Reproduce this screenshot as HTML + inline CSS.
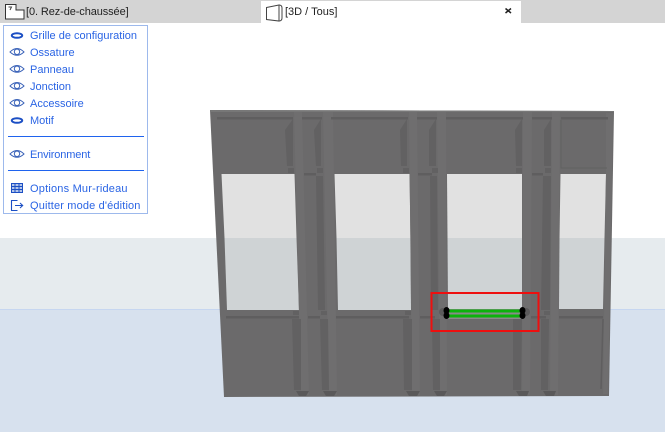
<!DOCTYPE html>
<html><head><meta charset="utf-8">
<style>
html,body{margin:0;padding:0;width:665px;height:432px;overflow:hidden;background:#fff}
#s{position:absolute;left:0;top:0}
.t{position:absolute;font:11px "Liberation Sans",sans-serif;white-space:nowrap;line-height:14px}
.m{color:#2a64e4;left:30px}
</style></head><body>
<svg id="s" width="665" height="432" viewBox="0 0 665 432" xmlns="http://www.w3.org/2000/svg">
<rect width="665" height="432" fill="#fff"/>
<rect y="238" width="665" height="72" fill="#e6ebee"/>
<rect y="310" width="665" height="122" fill="#d7e1ee"/>
<rect y="309" width="665" height="1" fill="#c6d6f0"/>
<rect width="665" height="23" fill="#d4d4d4"/>
<rect x="261" y="1" width="260" height="22" fill="#fff"/>
<path d="M5.500 4.500H16V10H24V19H5.500Z" fill="#fff" stroke="#333" stroke-width="1"/>
<path d="M8.500 7H11.500L10 10" fill="none" stroke="#444" stroke-width="1"/>
<path d="M266.500 7.500L279 5V21L266.500 19.500ZM279 5Q282 5 282 8V18Q282 21 279 21" fill="#fff" stroke="#444" stroke-width="1"/>
<path d="M505.500 8.500L511 13M511 8.500L505.500 13" stroke="#222" stroke-width="1.500"/>

<!-- wall -->
<path d="M210 110L614 111L609 396L224 397Z" fill="#6b6a6b"/>
<path d="M210 110L614 111L614 112L210 112Z" fill="#777"/>
<!-- glass -->
<g fill="#e1e1e1">
<path d="M221.500 174H294.500L296.500 238H224.500Z"/>
<path d="M334.500 174H409.500L410.500 238H336.500Z"/>
<path d="M447 174H522L522 238H447.500Z"/>
<path d="M560.500 174H606L604.500 238H559.500Z"/>
</g>
<g fill="#cfd3d5">
<path d="M224.500 238H296.500L299 310H227Z"/>
<path d="M336.500 238H410.500L411 310H338Z"/>
<path d="M447.500 238H522V310H448Z"/>
<path d="M559.500 238H604.500L603 309H559Z"/>
</g>
<!-- lighter mullions -->
<g fill="#6f6e6f">
<path d="M294 112H302L309 395H301Z"/>
<path d="M323 112H333L337 395H329Z"/>
<path d="M409 112H417L420 395H412Z"/>
<path d="M437 112H446L447 395H440Z"/>
<path d="M523 112H532L530 395H522Z"/>
<path d="M552 112H560L558 395H550Z"/>
<path d="M606 113H613L608 394H603L606 174Z"/>
</g>
<!-- horizontal dark rails top -->
<g fill="#5f5e5f">
<rect x="217" y="117" width="76" height="2.500"/>
<rect x="302" y="117" width="20" height="2.500"/>
<rect x="331" y="117" width="77" height="2.500"/>
<rect x="417" y="117" width="20" height="2.500"/>
<rect x="446" y="117" width="77" height="2.500"/>
<rect x="532" y="117" width="20" height="2.500"/>
<rect x="561" y="117" width="47" height="2.500"/>
<rect x="304" y="173" width="12" height="2.500"/>
<rect x="418" y="173" width="14" height="2.500"/>
<rect x="532" y="173" width="11" height="2.500"/>
<!-- bottom rails -->
<rect x="226" y="316" width="73" height="2.500"/>
<rect x="308" y="316" width="12" height="2.500"/>
<rect x="336" y="316" width="73" height="2.500"/>
<rect x="420" y="316" width="15" height="2.500"/>
<rect x="531" y="316" width="15" height="2.500"/>
<rect x="559" y="316" width="44" height="2.500"/>
</g>
<g fill="#626162">
<!-- shaded mullion faces upper -->
<path d="M293 119V166H287L285 130Z"/>
<path d="M321 119V166H316L314 130Z"/>
<path d="M407 119V166H401L400 130Z"/>
<path d="M436 119V166H429L429 130Z"/>
<path d="M522 119V166H516L515 130Z"/>
<path d="M551 119V166H544L544 130Z"/>
<!-- shaded mullion shafts -->
<path d="M316 176H323L325 310H318Z"/>
<path d="M430 176H437L438 310H431Z"/>
<path d="M543 176H551L550 310H541Z"/>
<!-- lower -->
<path d="M292 319H301L301 390H294Z"/>
<path d="M320 319H328L329 390H322Z"/>
<path d="M403 319H412V390H404Z"/>
<path d="M432 319H440L440 390H433Z"/>
<path d="M513 319H522L521 390H513Z"/>
<path d="M541 319H549L548 390H541Z"/>
<!-- small blocks -->
<rect x="288" y="168" width="6" height="5"/>
<rect x="317" y="168" width="6" height="5"/>
<rect x="403" y="168" width="6" height="5"/>
<rect x="432" y="168" width="6" height="5"/>
<rect x="516" y="168" width="6" height="5"/>
<rect x="545" y="168" width="6" height="5"/>
<rect x="293" y="311" width="6" height="4"/>
<rect x="321" y="311" width="6" height="4"/>
<rect x="405" y="311" width="6" height="4"/>
<rect x="544" y="311" width="6" height="4"/>
</g>
<!-- bottom feet -->
<g fill="#5a595a">
<path d="M296 391H309L306 396H299Z"/>
<path d="M323 391H337L334 396H326Z"/>
<path d="M406 391H420L417 396H409Z"/>
<path d="M434 391H447L444 396H437Z"/>
<path d="M516 391H529L527 396H519Z"/>
<path d="M543 391H556L554 396H546Z"/>
</g>
<path d="M561 120V168H607" fill="none" stroke="#626162" stroke-width="1"/>
<path d="M603 319L601 389" stroke="#5f5e5f" stroke-width="1.500"/>

<!-- handle -->
<g fill="#5c5b5c"><circle cx="443" cy="312" r="4"/><circle cx="526" cy="312" r="4"/></g>
<rect x="447" y="309" width="75" height="10" fill="#8a8a8a"/>
<rect x="447" y="309.500" width="75" height="3" fill="#0db20d"/>
<rect x="447" y="314.500" width="75" height="3" fill="#0db20d"/>
<g fill="#000">
<ellipse cx="446.500" cy="310.500" rx="3" ry="3.500"/><ellipse cx="446.500" cy="315.500" rx="3" ry="3.500"/>
<ellipse cx="522.500" cy="310.500" rx="3" ry="3.500"/><ellipse cx="522.500" cy="315.500" rx="3" ry="3.500"/>
</g>
<rect x="431.500" y="293" width="107" height="38" fill="none" stroke="#ee0f0f" stroke-width="2"/>

<!-- panel -->
<rect x="3.500" y="25.500" width="144" height="188" fill="#fff" stroke="#9db9ec" stroke-width="1"/>
<rect x="8" y="136" width="136" height="1" fill="#1f63ee"/>
<rect x="8" y="170" width="136" height="1" fill="#1f63ee"/>
<!-- bold eyes -->
<g fill="none" stroke="#1c4fc4" stroke-width="2">
<ellipse cx="17" cy="35.500" rx="5.200" ry="2.300"/>
<ellipse cx="17" cy="120.500" rx="5.200" ry="2.300"/>
</g>
<!-- open eyes -->
<g fill="none" stroke="#3a62b8" stroke-width="1">
<path d="M10 52Q17 45 24 52Q17 58.500 10 52Z"/><circle cx="17" cy="51.800" r="2.700"/>
<path d="M10 69Q17 62 24 69Q17 75.500 10 69Z"/><circle cx="17" cy="68.800" r="2.700"/>
<path d="M10 86Q17 79 24 86Q17 92.500 10 86Z"/><circle cx="17" cy="85.800" r="2.700"/>
<path d="M10 103Q17 96 24 103Q17 109.500 10 103Z"/><circle cx="17" cy="102.800" r="2.700"/>
<path d="M10 154Q17 147 24 154Q17 160.500 10 154Z"/><circle cx="17" cy="153.800" r="2.700"/>
</g>
<!-- options icon -->
<g fill="none" stroke="#1c4fc4" stroke-width="1">
<rect x="11.500" y="183.500" width="11" height="9" fill="#b4c6ea"/>
<path d="M11.500 186.500H22.500M11.500 189.500H22.500M15 183.500V192.500M19 183.500V192.500"/>
<path d="M17.500 200.500H11.500V210.500H17.500M15 205.500H22.500M20 203L22.700 205.500L20 208" stroke-width="1.100"/>
</g>
</svg>
<div class="t" style="left:26px;top:5px;color:#222;letter-spacing:-.1px">[0. Rez-de-chaussée]</div>
<div class="t" style="left:285px;top:5px;color:#222">[3D / Tous]</div>
<div class="t m" style="top:29px">Grille de configuration</div>
<div class="t m" style="top:46px">Ossature</div>
<div class="t m" style="top:63px">Panneau</div>
<div class="t m" style="top:80px">Jonction</div>
<div class="t m" style="top:97px">Accessoire</div>
<div class="t m" style="top:114px">Motif</div>
<div class="t m" style="top:148px;letter-spacing:-.15px">Environment</div>
<div class="t m" style="top:182px;letter-spacing:.2px">Options Mur-rideau</div>
<div class="t m" style="top:199px;letter-spacing:.15px">Quitter mode d'édition</div>
</body></html>
